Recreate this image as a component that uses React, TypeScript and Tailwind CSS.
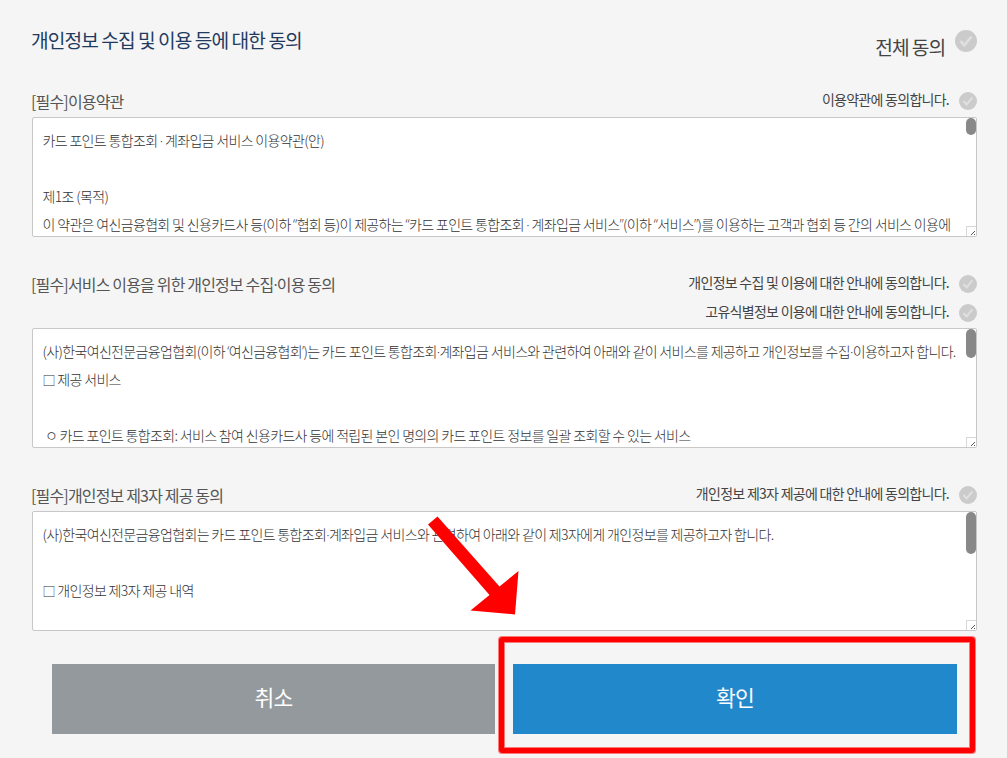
import React from 'react';

type CheckProps = {
    label: string;
};

type TermsBoxProps = {
    lines: string[];
    thumb: string;
};

// Middle dots and curly quotes come from a Latin face, where they are narrower
function Terms({ text }: { text: string }) {
    return (
        <>
            {text.split(/([·“”‘’□])/).map((part, i) => {
                if (/^[·“”‘’]$/.test(part)) return <span key={i} className="font-['Open_Sans','Noto_Sans',sans-serif]">{part}</span>;
                if (part === '□') return <span key={i} className="text-[13px]">{part}</span>;
                return part;
            })}
        </>
    );
}

function CheckIcon({ className }: { className: string }) {
    return (
        <svg viewBox="0 0 22 22" className={`shrink-0 ${className}`}>
            <circle cx="11" cy="11" r="11" fill="#cbcbcb" />
            <path d="M5.4 11L9.4 15.2L16.4 6.6" fill="none" stroke="#dfdfdf" strokeWidth="2.6" />
        </svg>
    );
}

function Check({ label }: CheckProps) {
    return (
        <label className="flex h-[29px] items-center justify-end gap-[10px] text-sm text-[#444]">
            <span className="-mt-[3px] tracking-[-0.052em] whitespace-nowrap">{label}</span>
            <CheckIcon className="mt-px size-[18px]" />
        </label>
    );
}

function TermsBox({ lines, thumb }: TermsBoxProps) {
    return (
        <div className="relative h-[120px] overflow-hidden rounded-[2px] border border-[#c8c8c8] bg-white px-[9.5px] pt-[8px] text-sm leading-7 font-light tracking-[-0.047em] text-[#333]">
            {lines.map((line, i) => (
                <p key={i} className="h-7 whitespace-pre"><Terms text={line} /></p>
            ))}
            {/* Scrollbar thumb and resize grip */}
            <div className={`absolute top-0 right-0 w-[10px] rounded-full bg-[#888] ${thumb}`}></div>
            <svg viewBox="0 0 10 10" className="absolute right-0 bottom-0 size-[10px]" shapeRendering="crispEdges">
                <path d="M0 0H10V10H0Z" fill="#fff" />
                <path d="M0 0H10V1H1V10H0Z" fill="#d8d8d8" />
                <path d="M8 5h1v1H8zM7 6h1v1H7zM6 7h1v1H6zM5 8h1v1H5zM8 8h1v1H8z" fill="#555" />
            </svg>
        </div>
    );
}

export default function App() {
    return (
        <main className="relative h-[758px] w-[1007px] overflow-hidden bg-[#f5f5f5] px-8 pr-[30px] font-['Noto_Sans_CJK_KR','Noto_Sans',sans-serif] tracking-[-0.052em]">
            <header className="flex h-[86px] justify-between pt-[26px]">
                <h1 className="-ml-px text-[19.2px] leading-7 tracking-[-0.049em] text-[#1f3b5f]">개인정보 수집 및 이용 등에 대한 동의</h1>
                <label className="flex gap-[10px] pt-[4px] text-[19.2px] text-[#444]">
                    <span className="mt-[3px] leading-7 tracking-[-0.055em]">전체 동의</span>
                    <CheckIcon className="size-[22px]" />
                </label>
            </header>

            <section className="h-[183px]">
                <div className="flex h-[31px] justify-between">
                    <h2 className="-ml-px text-base leading-[30px] text-[#555]">[필수]이용약관</h2>
                    <Check label="이용약관에 동의합니다." />
                </div>
                <TermsBox
                    thumb="h-[17px]"
                    lines={[
                        '카드 포인트 통합조회 · 계좌입금 서비스 이용약관(안)',
                        '',
                        '제1조 (목적)',
                        '이 약관은 여신금융협회 및 신용카드사 등(이하 “협회 등)이 제공하는 “카드 포인트 통합조회 · 계좌입금 서비스”(이하 “서비스”)를 이용하는 고객과 협회 등 간의 서비스 이용에',
                    ]}
                />
            </section>

            <section className="h-[211px]">
                <div className="flex h-[59px] justify-between">
                    <h2 className="-ml-px text-base leading-[30px] text-[#555]"><Terms text="[필수]서비스 이용을 위한 개인정보 수집·이용 동의" /></h2>
                    <div>
                        <Check label="개인정보 수집 및 이용에 대한 안내에 동의합니다." />
                        <Check label="고유식별정보 이용에 대한 안내에 동의합니다." />
                    </div>
                </div>
                <TermsBox
                    thumb="h-[29px]"
                    lines={[
                        '(사)한국여신전문금융업협회(이하 ‘여신금융협회’)는 카드 포인트 통합조회·계좌입금 서비스와 관련하여 아래와 같이 서비스를 제공하고 개인정보를 수집·이용하고자 합니다.',
                        '□ 제공 서비스',
                        '',
                        ' ㅇ 카드 포인트 통합조회: 서비스 참여 신용카드사 등에 적립된 본인 명의의 카드 포인트 정보를 일괄 조회할 수 있는 서비스',
                    ]}
                />
            </section>

            <section>
                <div className="flex h-[31px] justify-between">
                    <h2 className="-ml-px text-base leading-[30px] text-[#555]">[필수]개인정보 제3자 제공 동의</h2>
                    <Check label="개인정보 제3자 제공에 대한 안내에 동의합니다." />
                </div>
                <TermsBox
                    thumb="h-[42px]"
                    lines={[
                        '(사)한국여신전문금융업협회는 카드 포인트 통합조회·계좌입금 서비스와 관련하여 아래와 같이 제3자에게 개인정보를 제공하고자 합니다.',
                        '',
                        '□ 개인정보 제3자 제공 내역',
                    ]}
                />
            </section>

            <div className="mt-[33px] flex justify-between px-5 text-[21.5px] text-white">
                <button className="h-[70px] w-[443px] bg-[#93999c] pb-[4px]">취소</button>
                <button className="h-[70px] w-[444px] bg-[#2288cc] pb-[4px]">확인</button>
            </div>

            {/* Callout over the confirm button */}
            <div className="absolute top-[637px] left-[499px] h-[116px] w-[476px] rounded-[3px] border-5 border-[#ff0000] shadow-[0_0_0_1px_rgba(255,0,0,0.5),inset_0_0_0_1px_rgba(255,0,0,0.5)]"></div>
            <svg viewBox="0 0 100 100" className="absolute top-[515px] left-[425px] size-[100px]">
                <path d="M12.5 1.5L74.5 71.5L93.5 56L90 99.5L45.5 95.5L64.5 80L3 9.5Z" fill="#ff0000" />
            </svg>
        </main>
    );
}
